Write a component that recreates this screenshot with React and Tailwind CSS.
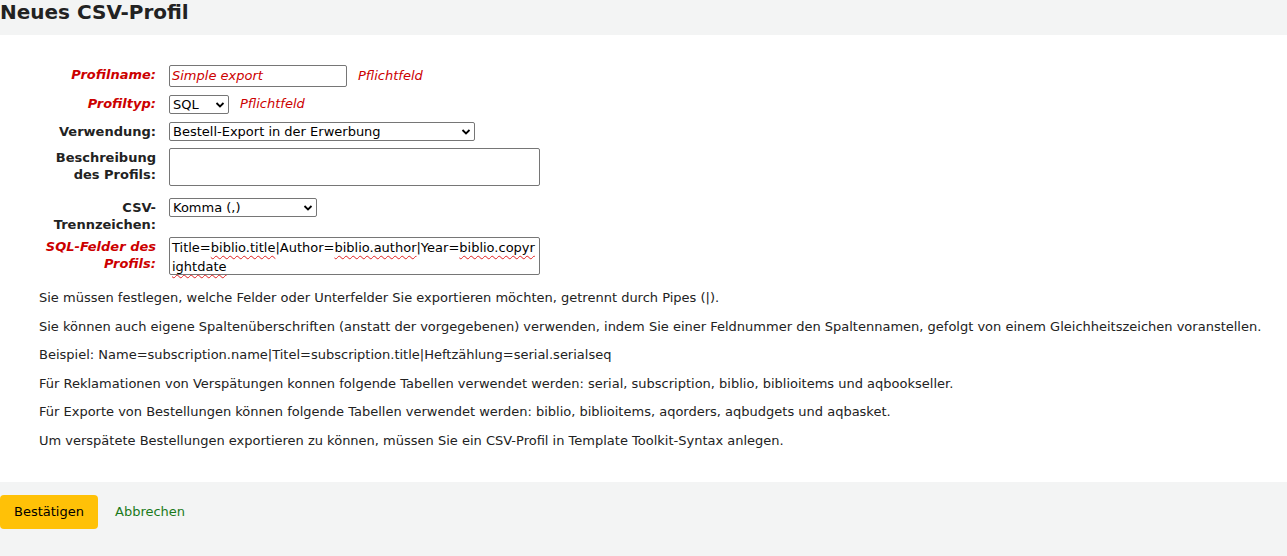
import React from 'react';

const Row = ({ label, required, children, className = '' }) => (
  <div className={`flex items-start ${className}`}>
    <label className={`w-[120px] ml-[36px] mr-[13px] text-right font-bold leading-[17px] pt-[1px] ${required ? 'text-[#cc0000] italic' : 'text-[#222]'}`}>
      {label}
    </label>
    <div className="flex items-center">{children}</div>
  </div>
);

const Select = ({ value, w }) => (
  <div className={`${w} h-[19px] border border-[#767676] rounded-[2px] bg-white flex items-center justify-between px-[3px] text-[13px] text-black`}>
    <span>{value}</span>
    <svg width="10" height="8" viewBox="0 0 10 8"><path d="M1.5 2l3.5 3.5L8.5 2" fill="none" stroke="#000" strokeWidth="1.8" /></svg>
  </div>
);

const Squig = ({ children }) => (
  <span className="underline decoration-wavy decoration-[#e02020] decoration-1 underline-offset-[3px]">{children}</span>
);

export default function App() {
  const notes = [
    'Sie müssen festlegen, welche Felder oder Unterfelder Sie exportieren möchten, getrennt durch Pipes (|).',
    'Sie können auch eigene Spaltenüberschriften (anstatt der vorgegebenen) verwenden, indem Sie einer Feldnummer den Spaltennamen, gefolgt von einem Gleichheitszeichen voranstellen.',
    'Beispiel: Name=subscription.name|Titel=subscription.title|Heftzählung=serial.serialseq',
    'Für Reklamationen von Verspätungen konnen folgende Tabellen verwendet werden: serial, subscription, biblio, biblioitems und aqbookseller.',
    'Für Exporte von Bestellungen können folgende Tabellen verwendet werden: biblio, biblioitems, aqorders, aqbudgets und aqbasket.',
    'Um verspätete Bestellungen exportieren zu können, müssen Sie ein CSV-Profil in Template Toolkit-Syntax anlegen.',
  ];
  return (
    <div className="w-[1287px] h-[556px] bg-[#f3f4f4] text-[13px] text-[#222]" style={{ fontFamily: '"DejaVu Sans", sans-serif' }}>
      <div className="h-[35px] flex items-start">
        <h1 className="text-[20px] font-bold text-[#222] leading-[24px] mt-[0px]">Neues CSV-Profil</h1>
      </div>
      <div className="bg-white h-[447px] pt-[30px]">
        <Row label="Profilname:" required className="h-[29px]">
          <div className="w-[178px] h-[22px] border border-[#767676] rounded-[2px] px-[2px] text-[#cc0000] italic flex items-center">Simple export</div>
          <span className="ml-[11px] text-[#cc0000] italic">Pflichtfeld</span>
        </Row>
        <Row label="Profiltyp:" required className="h-[28px]">
          <div className="mt-[1px]"><Select value="SQL" w="w-[60px]" /></div>
          <span className="ml-[11px] text-[#cc0000] italic">Pflichtfeld</span>
        </Row>
        <Row label="Verwendung:" className="h-[26px]">
          <Select value="Bestell-Export in der Erwerbung" w="w-[306px]" />
        </Row>
        <Row label="Beschreibung des Profils:" className="h-[50px]">
          <div className="w-[371px] h-[38px] border border-[#767676] rounded-[2px] mt-[0px]" />
        </Row>
        <Row label="CSV-Trennzeichen:" className="h-[39px]">
          <Select value="Komma (,)" w="w-[148px]" />
        </Row>
        <Row label="SQL-Felder des Profils:" required className="h-[50px]">
          <div className="w-[371px] h-[38px] border border-[#767676] rounded-[2px] px-[2px] text-black leading-[19px] text-[13px] break-all">
            Title=<Squig>biblio.title</Squig>|Author=<Squig>biblio.author</Squig>|Year=<Squig>biblio.copyr</Squig><br /><Squig>ightdate</Squig>
          </div>
        </Row>
        <div className="pl-[39px] mt-[2px]">
          {notes.map((n, i) => (
            <p key={i} className="h-[28.6px] leading-[17px] text-[13px] text-[#222]">{n}</p>
          ))}
        </div>
      </div>
      <div className="flex items-center pt-[13px]">
        <button className="w-[98px] h-[34px] bg-[#ffc107] rounded-[4px] text-[13px] text-black">Bestätigen</button>
        <a className="ml-[17px] text-[#1a7a1a] text-[13px]">Abbrechen</a>
      </div>
    </div>
  );
}
